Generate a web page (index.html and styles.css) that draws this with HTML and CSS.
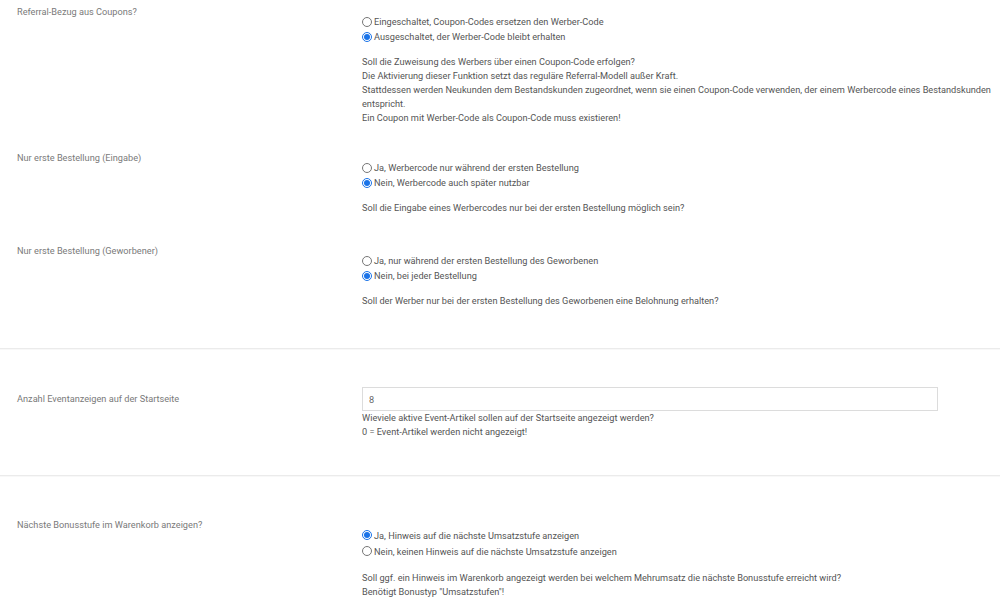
FILE: index.html
```html
<!DOCTYPE html>
<html lang="de">
<head>
<meta charset="utf-8">
<title>Einstellungen</title>
<link rel="stylesheet" href="styles.css">
</head>
<body>
<div class="page">
  <div class="row first">
    <div class="label">Referral-Bezug aus Coupons?</div>
    <div class="field">
      <div class="radios">
        <label class="radio"><input type="radio" name="r1"> Eingeschaltet, Coupon-Codes ersetzen den Werber-Code</label>
        <label class="radio"><input type="radio" name="r1" checked> Ausgeschaltet, der Werber-Code bleibt erhalten</label>
      </div>
      <div class="desc">Soll die Zuweisung des Werbers über einen Coupon-Code erfolgen?<br>Die Aktivierung dieser Funktion setzt das reguläre Referral-Modell außer Kraft.<br>Stattdessen werden Neukunden dem Bestandskunden zugeordnet, wenn sie einen Coupon-Code verwenden, der einem Werbercode eines Bestandskunden entspricht.<br>Ein Coupon mit Werber-Code als Coupon-Code muss existieren!</div>
    </div>
  </div>

  <div class="row">
    <div class="label">Nur erste Bestellung (Eingabe)</div>
    <div class="field">
      <div class="radios">
        <label class="radio"><input type="radio" name="r2"> Ja, Werbercode nur während der ersten Bestellung</label>
        <label class="radio"><input type="radio" name="r2" checked> Nein, Werbercode auch später nutzbar</label>
      </div>
      <div class="desc">Soll die Eingabe eines Werbercodes nur bei der ersten Bestellung möglich sein?</div>
    </div>
  </div>

  <div class="row last">
    <div class="label">Nur erste Bestellung (Geworbener)</div>
    <div class="field">
      <div class="radios">
        <label class="radio"><input type="radio" name="r3"> Ja, nur während der ersten Bestellung des Geworbenen</label>
        <label class="radio"><input type="radio" name="r3" checked> Nein, bei jeder Bestellung</label>
      </div>
      <div class="desc">Soll der Werber nur bei der ersten Bestellung des Geworbenen eine Belohnung erhalten?</div>
    </div>
  </div>

  <hr class="sep">

  <div class="row input-row">
    <div class="label">Anzahl Eventanzeigen auf der Startseite</div>
    <div class="field">
      <input class="text" type="text" value="8">
      <div class="help">Wieviele aktive Event-Artikel sollen auf der Startseite angezeigt werden?<br>0 = Event-Artikel werden nicht angezeigt!</div>
    </div>
  </div>

  <hr class="sep">

  <div class="row section-start">
    <div class="label">Nächste Bonusstufe im Warenkorb anzeigen?</div>
    <div class="field">
      <div class="radios loose">
        <label class="radio"><input type="radio" name="r5" checked> Ja, Hinweis auf die nächste Umsatzstufe anzeigen</label>
        <label class="radio"><input type="radio" name="r5"> Nein, keinen Hinweis auf die nächste Umsatzstufe anzeigen</label>
      </div>
      <div class="desc">Soll ggf. ein Hinweis im Warenkorb angezeigt werden bei welchem Mehrumsatz die nächste Bonusstufe erreicht wird?<br>Benötigt Bonustyp "Umsatzstufen"!</div>
    </div>
  </div>
</div>
</body>
</html>
```

FILE: styles.css
```css
html, body {
  margin: 0;
  padding: 0;
  background: #fff;
}
body {
  font-family: Roboto, "Liberation Sans", sans-serif;
  font-size: 9.2px;
  color: #555;
}
.page {
  width: 1000px;
}
.row {
  display: grid;
  grid-template-columns: 362px 1fr;
  padding: 5px 6px 24px 0;
}
.row.first {
  padding-bottom: 21px;
}
.row.last {
  padding-bottom: 40px;
}
.label {
  padding-left: 17px;
  line-height: 14px;
  color: #7a7a7a;
}
.field {
  padding-top: 9px;
}
.radios {
  display: flex;
  flex-direction: column;
}
.radio {
  display: flex;
  align-items: center;
  height: 15px;
  line-height: 15px;
  color: #555;
}
.radios.loose .radio {
  height: 16px;
}
.radio input {
  width: 10px;
  height: 10px;
  margin: 0 2px 0 0;
  accent-color: #1a73e8;
}
.desc {
  margin-top: 11px;
  line-height: 14px;
  color: #555;
}
.radios.loose + .desc {
  margin-top: 12px;
}
.sep {
  margin: 0;
  border: 0;
  border-top: 1px solid #ebebeb;
  border-bottom: 1px solid #f8f8f8;
  height: 0;
}
.input-row {
  padding: 37px 62px 36px 0;
  align-items: start;
}
.input-row .label {
  padding-top: 5px;
}
.input-row .field {
  padding-top: 0;
}
.text {
  display: block;
  box-sizing: border-box;
  width: 100%;
  height: 24px;
  margin: 0;
  padding: 0 6px;
  border: 1px solid #dcdcdc;
  font-family: inherit;
  font-size: 9.2px;
  color: #666;
  outline: none;
}
.help {
  line-height: 14px;
  color: #555;
}
.section-start {
  padding-top: 41px;
}
```
